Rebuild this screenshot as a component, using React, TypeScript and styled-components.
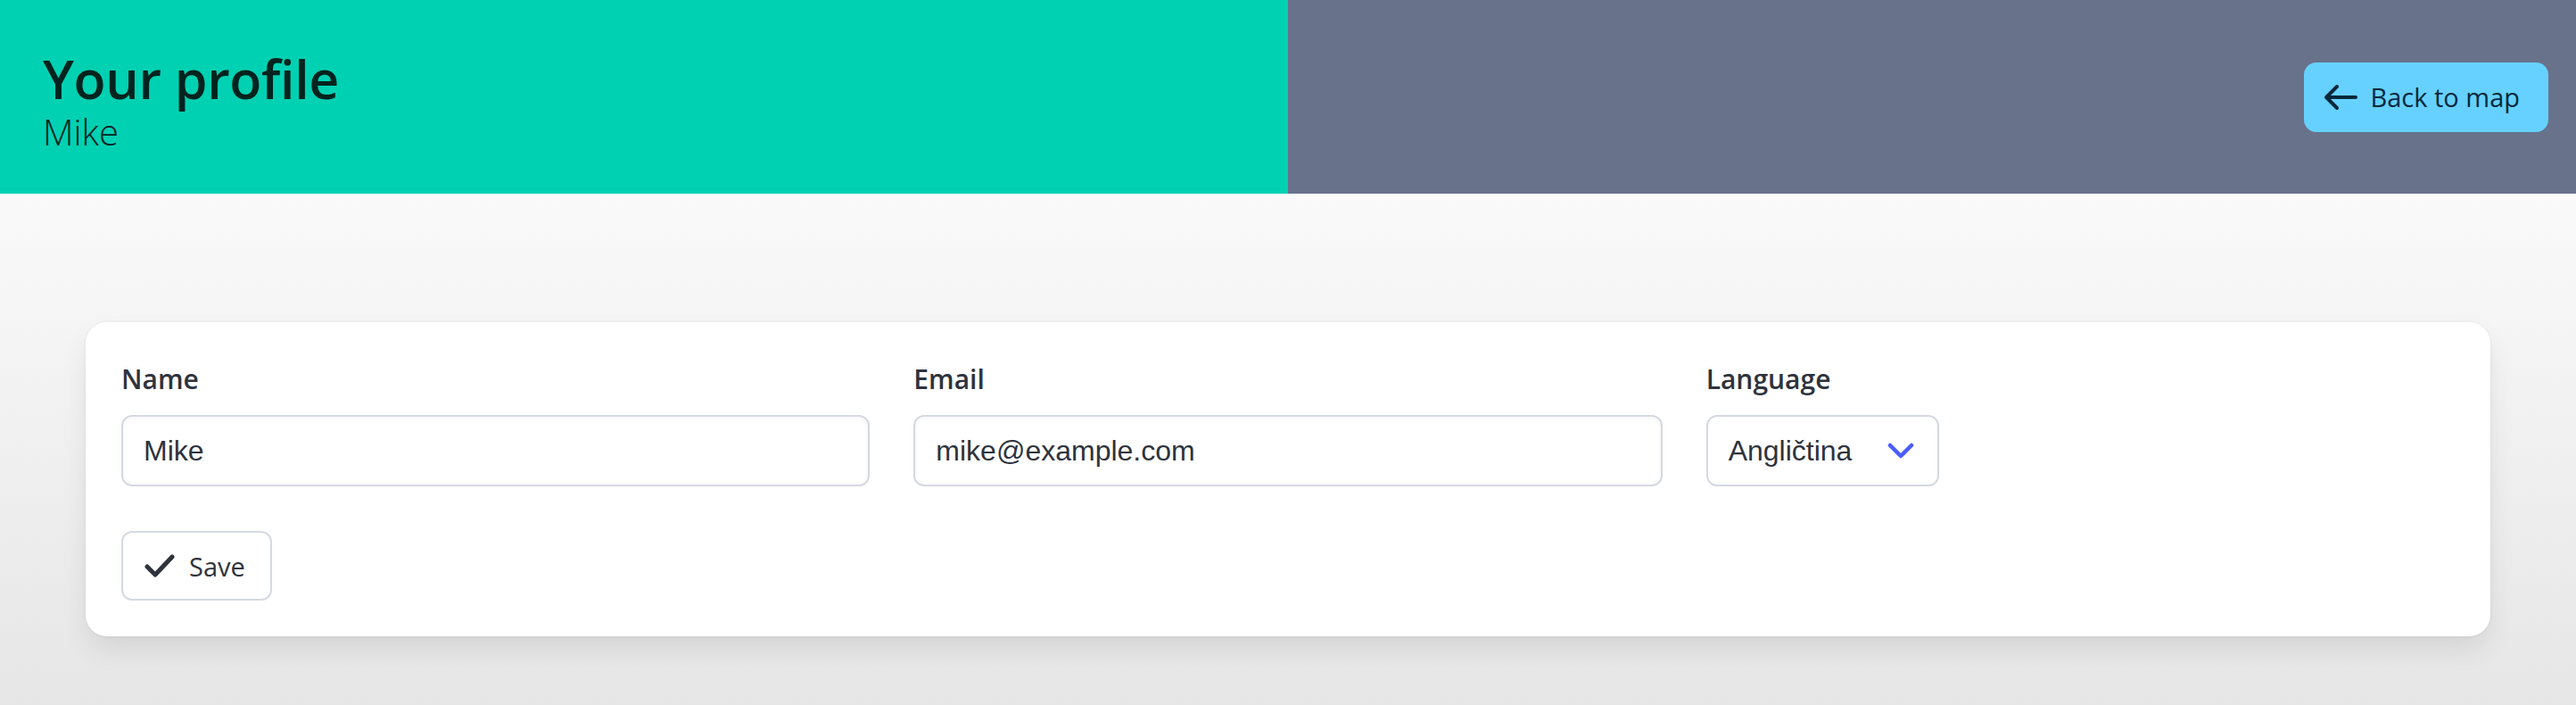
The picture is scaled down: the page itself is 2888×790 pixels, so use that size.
import React from "react";
import styled, { createGlobalStyle } from "styled-components";

const GlobalStyle = createGlobalStyle`
  html, body {
    margin: 0;
    padding: 0;
  }

  body {
    font-family: "Open Sans", "Noto Sans", sans-serif;
    color: #363b45;
    background: #e6e6e6;
  }
`;

const Page = styled.div`
  width: 2888px;
  height: 790px;
  display: flex;
  flex-direction: column;
  background: linear-gradient(#fafafa 217px, #e6e6e6 790px);
`;

const Hero = styled.header`
  height: 217px;
  display: flex;
  flex-shrink: 0;
`;

const HeroHalf = styled.div<{ $tone: "primary" | "grey" }>`
  flex: 1;
  display: flex;
  flex-direction: column;
  justify-content: center;
  align-items: ${(p) => (p.$tone === "grey" ? "flex-end" : "flex-start")};
  padding: ${(p) => (p.$tone === "grey" ? "0 31px 0 48px" : "8px 31px 0 48px")};
  background: ${(p) => (p.$tone === "grey" ? "#68728a" : "#00d1b2")};
`;

const Title = styled.h1`
  margin: 0 0 4px;
  font-size: 59px;
  font-weight: 600;
  line-height: 66px;
  letter-spacing: -0.3px;
  color: #02231e;
`;

const Subtitle = styled.h2`
  margin: 0;
  font-size: 40px;
  font-weight: 300;
  line-height: 46px;
  color: #02231e;
`;

const BackButton = styled.button`
  height: 78px;
  display: flex;
  align-items: center;
  gap: 14px;
  padding: 0 32px 0 22px;
  border: none;
  border-radius: 14px;
  background: #66d1ff;
  color: #05283a;
  font-family: inherit;
  font-size: 29px;
  cursor: pointer;
`;

const Main = styled.main`
  padding: 144px 96px 0;
`;

const Box = styled.section`
  padding: 40px;
  border-radius: 24px;
  background: #fff;
  box-shadow: 0 16px 32px -4px rgba(10, 10, 10, 0.1),
    0 0 0 2px rgba(10, 10, 10, 0.02);
`;

const Fields = styled.div`
  display: grid;
  grid-template-columns: repeat(3, 1fr);
  column-gap: 49px;
`;

const Field = styled.div`
  display: flex;
  flex-direction: column;
  align-items: flex-start;
`;

const Label = styled.label`
  margin-bottom: 16px;
  font-size: 30px;
  font-weight: 600;
  line-height: 48px;
  color: #2e333d;
`;

const Input = styled.input`
  box-sizing: border-box;
  width: 100%;
  height: 80px;
  padding: 0 23px;
  border: 2px solid #d5d9e0;
  border-radius: 12px;
  box-shadow: inset 0 1px 4px rgba(10, 10, 10, 0.05);
  font-family: "Liberation Sans", Arial, sans-serif;
  font-size: 32px;
  color: #2e333d;
  outline: none;
`;

const SelectWrap = styled.div`
  height: 80px;
  box-sizing: border-box;
  display: flex;
  align-items: center;
  gap: 40px;
  padding: 0 26px 0 23px;
  border: 2px solid #d5d9e0;
  border-radius: 12px;
  background: #fff;
  font-family: "Liberation Sans", Arial, sans-serif;
  font-size: 32px;
  color: #2e333d;
`;

const Actions = styled.div`
  margin-top: 50px;
`;

const Button = styled.button`
  height: 78px;
  display: flex;
  align-items: center;
  gap: 16px;
  padding: 0 28px 0 24px;
  border: 2px solid #d5d9e0;
  border-radius: 12px;
  background: #fff;
  color: #2e333d;
  font-family: inherit;
  font-size: 29px;
  cursor: pointer;
`;

const ArrowLeft = () => (
  <svg width="38" height="30" viewBox="0 0 38 30" fill="none">
    <path
      d="M36 15H4M15 3L3 15l12 12"
      stroke="currentColor"
      strokeWidth="4"
      strokeLinecap="round"
      strokeLinejoin="round"
    />
  </svg>
);

const CheckMark = () => (
  <svg width="34" height="28" viewBox="0 0 34 28" fill="none">
    <path
      d="M3 15l9 9L31 4"
      stroke="currentColor"
      strokeWidth="5"
      strokeLinecap="round"
      strokeLinejoin="round"
    />
  </svg>
);

const Chevron = () => (
  <svg width="30" height="18" viewBox="0 0 30 18" fill="none">
    <path
      d="M3 3l12 12L27 3"
      stroke="#4a5cff"
      strokeWidth="4.5"
      strokeLinecap="round"
      strokeLinejoin="round"
    />
  </svg>
);

export default function App() {
  return (
    <>
      <GlobalStyle />
      <Page>
        <Hero>
          <HeroHalf $tone="primary">
            <Title>Your profile</Title>
            <Subtitle>Mike</Subtitle>
          </HeroHalf>
          <HeroHalf $tone="grey">
            <BackButton>
              <ArrowLeft />
              Back to map
            </BackButton>
          </HeroHalf>
        </Hero>
        <Main>
          <Box>
            <Fields>
              <Field>
                <Label>Name</Label>
                <Input defaultValue="Mike" />
              </Field>
              <Field>
                <Label>Email</Label>
                <Input defaultValue="mike@example.com" />
              </Field>
              <Field>
                <Label>Language</Label>
                <SelectWrap>
                  Angličtina
                  <Chevron />
                </SelectWrap>
              </Field>
            </Fields>
            <Actions>
              <Button>
                <CheckMark />
                Save
              </Button>
            </Actions>
          </Box>
        </Main>
      </Page>
    </>
  );
}
